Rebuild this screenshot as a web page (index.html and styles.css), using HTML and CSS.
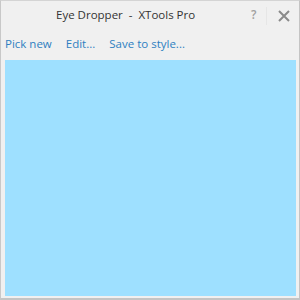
FILE: index.html
```html
<!DOCTYPE html>
<html>
<head>
<meta charset="utf-8">
<link rel="stylesheet" href="styles.css">
</head>
<body>
<div class="window">
  <div class="titlebar">
    <div class="title">Eye Dropper&nbsp;&nbsp;-&nbsp;&nbsp;XTools Pro</div>
    <div class="help">?</div>
    <div class="sep"></div>
    <div class="close">
      <svg width="12" height="12" viewBox="0 0 12 12"><path d="M1 1 L11 11 M11 1 L1 11" stroke="#8a8a8a" stroke-width="2"/></svg>
    </div>
  </div>
  <div class="toolbar">
    <a class="link">Pick new</a>
    <a class="link">Edit...</a>
    <a class="link">Save to style...</a>
  </div>
  <div class="swatch"></div>
</div>
</body>
</html>
```
FILE: styles.css
```css
html, body {
  margin: 0;
  padding: 0;
  width: 300px;
  height: 300px;
  overflow: hidden;
}
.window {
  box-sizing: border-box;
  width: 300px;
  height: 300px;
  background: #f0f0f0;
  border-left: 1px solid #c8c8c8;
  border-top: 1px solid #d4d4d4;
  border-right: 1px solid #c4c4c4;
  border-bottom: 2px solid #c4c4c4;
  display: flex;
  flex-direction: column;
  font-family: "Open Sans", "Noto Sans", sans-serif;
  font-size: 11px;
}
.titlebar {
  height: 30px;
  display: flex;
  align-items: center;
  position: relative;
}
.title {
  position: absolute;
  left: 55px;
  top: 6px;
  color: #333;
  font-size: 11.5px;
  white-space: nowrap;
}
.help {
  position: absolute;
  left: 250px;
  top: 5px;
  color: #a0a0a0;
  font-size: 12px;
  font-weight: 600;
}
.sep {
  position: absolute;
  left: 265px;
  top: 6px;
  width: 1px;
  height: 18px;
  background: #e6e6e6;
}
.close {
  position: absolute;
  left: 277px;
  top: 9px;
  width: 12px;
  height: 12px;
}
.toolbar {
  display: flex;
  gap: 14px;
  padding: 5px 0 0 4px;
  height: 24px;
  box-sizing: border-box;
}
.link {
  color: #2e7fc1;
  font-size: 11.5px;
  white-space: nowrap;
}
.swatch {
  margin: 5px 3px 2px 4px;
  flex: 1;
  background: #9ee0ff;
}
```
